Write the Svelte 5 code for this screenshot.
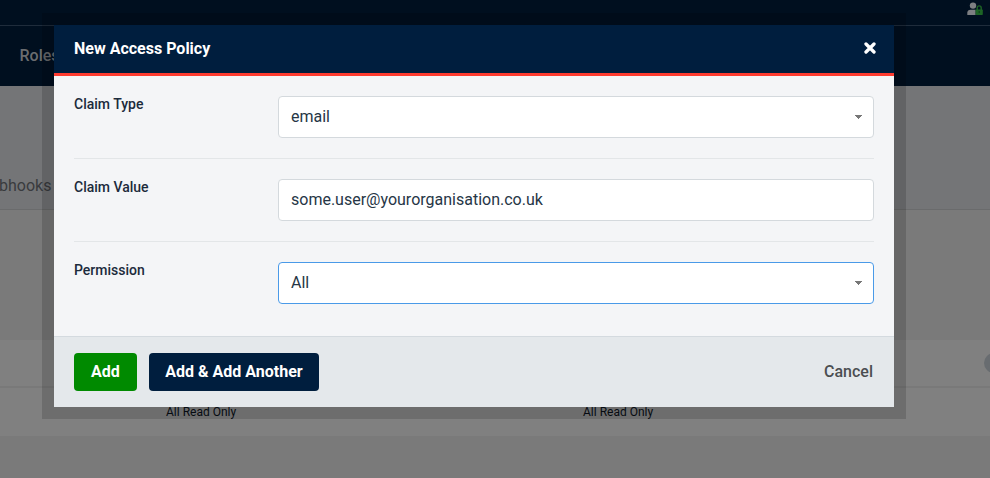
<script>
  const readOnly = ['All Read Only', 'All Read Only'];
  let claimValue = $state('some.user@yourorganisation.co.uk');
</script>

{#snippet caret()}
  <svg class="caret" width="7" height="4" viewBox="0 0 7 4" shape-rendering="crispEdges"><path d="M0 0h7v1H6v1H5v1H4v1H3V3H2V2H1V1H0z" fill="#777" /></svg>
{/snippet}

<div class="page">
  <div class="topbar">
    <svg width="17" height="14" viewBox="0 0 17 14">
      <circle cx="6" cy="3.6" r="3.2" fill="#7d7f82" />
      <path d="M.3 13v-2.4C.3 8.800 1.700 7.700 3.400 7.700h5.200V13z" fill="#7d7f82" />
      <path d="M10.200 8V5.900a2 2 0 0 1 4 0V8" fill="none" stroke="#1d6425" stroke-width="1.400" />
      <rect x="8.600" y="7.500" width="7.200" height="5.500" rx=".7" fill="#1d6425" />
      <rect x="11.700" y="9" width="1" height="2" fill="#0c3a16" />
    </svg>
  </div>
  <nav>Roles</nav>
  <div class="tabs"><span>bhooks</span></div>
  <div class="space"></div>
  <div class="tablehead"><span></span></div>
  <div class="tablerow">
    {#each readOnly as text}<span>{text}</span>{/each}
  </div>
</div>

<div class="overlay">
  <div class="modal">
    <header>
      <span>New Access Policy</span>
      <svg width="12" height="12" viewBox="0 0 12 12"><path d="M2 2l8 8M10 2l-8 8" stroke="#fff" stroke-width="3.300" stroke-linecap="round" /></svg>
    </header>
    <div class="body">
      <div class="row"><span class="label">Claim Type</span><div class="field">email{@render caret()}</div></div>
      <div class="row"><span class="label">Claim Value</span><input class="field" bind:value={claimValue} /></div>
      <div class="row"><span class="label">Permission</span><div class="field focused">All{@render caret()}</div></div>
    </div>
    <footer>
      <button class="add">Add</button>
      <button class="another">Add &amp; Add Another</button>
      <button class="cancel">Cancel</button>
    </footer>
  </div>
</div>

<style>
  :global(body) { margin: 0; overflow: hidden; font-family: Roboto, sans-serif; }
  * { box-sizing: border-box; }
  .page { height: 478px; background: #7a7a7a; overflow: hidden; }
  .topbar { height: 26px; background: #000f1f; border-bottom: 1px solid #1f2c3b; display: flex; justify-content: flex-end; padding: 2px 6px 0 0; }
  nav { height: 60px; background: #000f1f; color: #6a6c6f; font-size: 16px; font-weight: 500; line-height: 60px; padding-left: 19.500px; }
  .tabs { height: 124px; background: #747577; border-bottom: 1px solid #6a6b6c; color: #393b3e; font-size: 16px; line-height: 20px; padding-top: 90px; }
  .tabs span { margin-left: -1px; }
  .space { height: 130px; }
  .tablehead { height: 48px; background: #808080; border-bottom: 2px solid #797979; display: flex; justify-content: flex-end; align-items: center; overflow: hidden; }
  .tablehead span { width: 20px; height: 20px; flex: none; border-radius: 50%; background: #686c70; margin-right: -14px; }
  .tablerow { height: 48px; background: #808080; display: flex; padding-left: 166px; font-size: 12px; line-height: 48px; color: #080e14; }
  .tablerow span { width: 417px; flex: none; }
  .overlay { position: absolute; inset: 0; padding: 25px 96px 0 54px; }
  .modal { width: 840px; height: 382px; display: flex; flex-direction: column; box-shadow: 0 0 0 12px rgba(0, 0, 0, .15); }
  header { height: 51px; flex: none; background: #001e3e; border-bottom: 3px solid #ff3b30; color: #fff; display: flex; align-items: center; justify-content: space-between; padding: 0 18px 2px 20px; font-size: 16px; font-weight: 700; }
  .body { height: 260px; background: #f4f5f7; padding: 0 20px; }
  .row { height: 83px; padding: 20px 0; border-bottom: 1px solid #e3e6e8; display: flex; }
  .row:last-child { border-bottom: 0; }
  .label { width: 204px; flex: none; font-size: 14px; font-weight: 500; line-height: 16px; color: #1c2b3c; }
  .field { width: 596px; height: 42px; background: #fff; border: 1px solid #d4d9dd; border-radius: 4px; padding: 0 11px 2px 12px; font: 400 16px Roboto, sans-serif; color: #263646; display: flex; align-items: center; justify-content: space-between; outline: 0; }
  .caret { margin-top: 2px; }
  .focused { border-color: #4a9ae8; }
  footer { height: 71px; background: #e4e8eb; border-top: 1px solid #d4dadf; padding: 16px 20px; display: flex; gap: 12px; align-items: flex-start; }
  button { height: 38px; border: 0; border-radius: 4px; padding: 0 0 1px; color: #fff; font: 700 16px Roboto, sans-serif; }
  .add { width: 63px; background: #008a00; }
  .another { width: 170px; background: #001e3e; }
  .cancel { margin: 0 1px 0 auto; background: none; color: #4b4e51; font-weight: 500; }
</style>
